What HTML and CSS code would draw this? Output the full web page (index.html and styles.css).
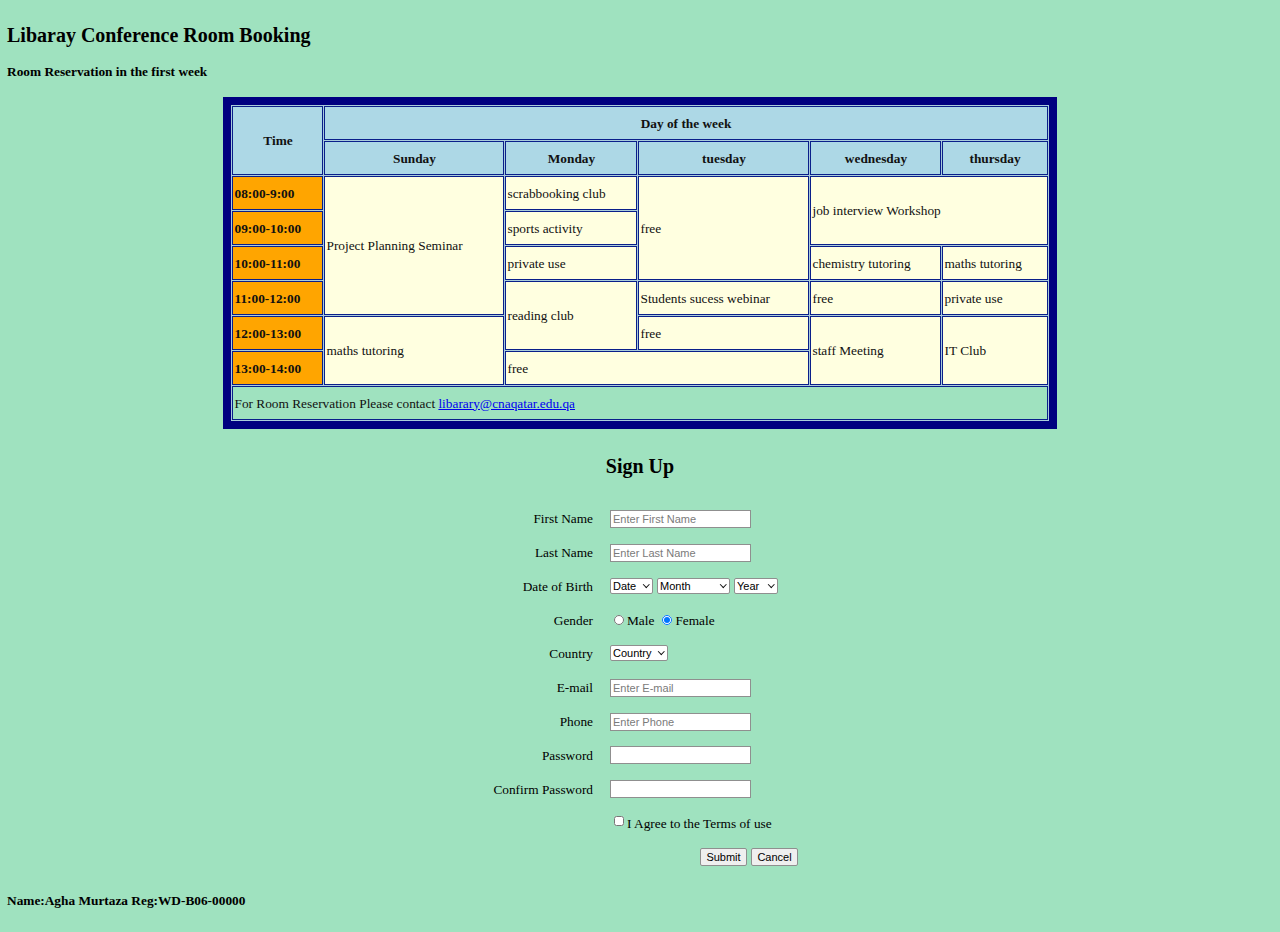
FILE: index.html
```html
<!DOCTYPE html>
<html lang="en">
<head>
<meta charset="utf-8">
<title>Libaray Conference Room Booking</title>
<link rel="stylesheet" href="styles.css">
</head>
<body>
<h1 class="title">Libaray Conference Room Booking</h1>
<h4 class="subtitle">Room Reservation in the first week</h4>

<table class="schedule">
  <colgroup>
    <col class="c-time">
    <col class="c-sun">
    <col class="c-mon">
    <col class="c-tue">
    <col class="c-wed">
    <col class="c-thu">
  </colgroup>
  <tr>
    <th class="head" rowspan="2">Time</th>
    <th class="head" colspan="5">Day of the week</th>
  </tr>
  <tr>
    <th class="head">Sunday</th>
    <th class="head">Monday</th>
    <th class="head">tuesday</th>
    <th class="head">wednesday</th>
    <th class="head">thursday</th>
  </tr>
  <tr>
    <th class="slot">08:00-9:00</th>
    <td rowspan="4">Project Planning Seminar</td>
    <td>scrabbooking club</td>
    <td rowspan="3">free</td>
    <td colspan="2" rowspan="2">job interview Workshop</td>
  </tr>
  <tr>
    <th class="slot">09:00-10:00</th>
    <td>sports activity</td>
  </tr>
  <tr>
    <th class="slot">10:00-11:00</th>
    <td>private use</td>
    <td>chemistry tutoring</td>
    <td>maths tutoring</td>
  </tr>
  <tr>
    <th class="slot">11:00-12:00</th>
    <td rowspan="2">reading club</td>
    <td>Students sucess webinar</td>
    <td>free</td>
    <td>private use</td>
  </tr>
  <tr>
    <th class="slot">12:00-13:00</th>
    <td rowspan="2">maths tutoring</td>
    <td>free</td>
    <td rowspan="2">staff Meeting</td>
    <td rowspan="2">IT Club</td>
  </tr>
  <tr>
    <th class="slot">13:00-14:00</th>
    <td colspan="2">free</td>
  </tr>
  <tr>
    <td class="contact" colspan="6">For Room Reservation Please contact <a href="#">libarary@cnaqatar.edu.qa</a></td>
  </tr>
</table>

<h2 class="signup-title">Sign Up</h2>

<form class="signup">
  <label class="lbl" for="fn">First Name</label>
  <div class="ctl"><input class="text" id="fn" type="text" placeholder="Enter First Name"></div>

  <label class="lbl" for="ln">Last Name</label>
  <div class="ctl"><input class="text" id="ln" type="text" placeholder="Enter Last Name"></div>

  <span class="lbl">Date of Birth</span>
  <div class="ctl selects">
    <span class="sel-wrap sel-date"><select class="sel"><option>Date</option></select></span>
    <span class="sel-wrap sel-month"><select class="sel"><option>Month</option></select></span>
    <span class="sel-wrap sel-year"><select class="sel"><option>Year</option></select></span>
  </div>

  <span class="lbl">Gender</span>
  <div class="ctl radios">
    <label class="opt"><input class="radio" type="radio" name="g">Male</label>
    <label class="opt"><input class="radio" type="radio" name="g" checked>Female</label>
  </div>

  <span class="lbl lbl-country">Country</span>
  <div class="ctl ctl-country"><span class="sel-wrap sel-country"><select class="sel"><option>Country</option></select></span></div>

  <label class="lbl" for="em">E-mail</label>
  <div class="ctl"><input class="text" id="em" type="text" placeholder="Enter E-mail"></div>

  <label class="lbl" for="ph">Phone</label>
  <div class="ctl"><input class="text" id="ph" type="text" placeholder="Enter Phone"></div>

  <label class="lbl" for="pw">Password</label>
  <div class="ctl"><input class="text" id="pw" type="password"></div>

  <label class="lbl" for="cpw">Confirm Password</label>
  <div class="ctl"><input class="text" id="cpw" type="password"></div>

  <span class="lbl"></span>
  <div class="ctl"><label class="opt agree"><input class="check" type="checkbox">I Agree to the Terms of use</label></div>

  <span class="lbl"></span>
  <div class="ctl buttons">
    <button class="btn" type="button">Submit</button>
    <button class="btn" type="button">Cancel</button>
  </div>
</form>

<p class="credit">Name:Agha Murtaza Reg:WD-B06-00000</p>
</body>
</html>
```

FILE: styles.css
```css
html {
  background: #9fe2bf;
}

body {
  margin: 0;
  padding: 7px;
  background: #9fe2bf;
  color: #000;
  font-family: "Liberation Serif", "Times New Roman", serif;
  font-size: 13.33px;
}

.title {
  margin: 17px 0 0;
  font-size: 20px;
  line-height: 23px;
  font-weight: bold;
}

.subtitle {
  margin: 17px 0 0;
  font-size: 13.33px;
  line-height: 15px;
  font-weight: bold;
}

/* schedule table */
.schedule {
  width: 833px;
  margin: 18px auto 0;
  table-layout: fixed;
  border: 8px solid #000080;
  border-spacing: 1px;
  background: #a9cbdb;
}

.c-time { width: 91px; }
.c-sun { width: 180px; }
.c-mon { width: 132px; }
.c-tue { width: 171px; }
.c-wed { width: 131px; }
.c-thu { width: 105px; }

.schedule th,
.schedule td {
  border: 1px solid #0a1f8a;
  padding: 8.5px 1px 7.5px;
  line-height: 16px;
  font-size: 13.33px;
  vertical-align: middle;
  text-align: left;
  font-weight: normal;
  background: #ffffe0;
  color: #111;
  white-space: nowrap;
  overflow: hidden;
}

.schedule th.head {
  background: #add8e6;
  font-weight: bold;
  text-align: center;
}

.schedule th.slot {
  background: #ffa500;
  font-weight: bold;
}

.schedule td.contact {
  background: #9fe2bf;
}

.contact a {
  color: #0000ee;
  text-decoration: underline;
}

/* sign up */
.signup-title {
  margin: 26px 0 24px;
  text-align: center;
  font-size: 20px;
  line-height: 23px;
  font-weight: bold;
}

.signup {
  display: grid;
  grid-template-columns: 113px 190px;
  grid-auto-rows: 33.8px;
  column-gap: 17px;
  align-items: center;
  width: 320px;
  margin: 0 auto;
}

.lbl {
  text-align: right;
  font-size: 13.33px;
  line-height: 15px;
}

.ctl {
  display: flex;
  align-items: center;
}

.lbl-country,
.ctl-country {
  position: relative;
  top: -1px;
}

.text {
  box-sizing: border-box;
  width: 141px;
  height: 18px;
  margin: 0;
  padding: 1px 2px;
  border: 1px solid #8f8f8f;
  border-radius: 0;
  background: #fff;
  font-family: "Liberation Sans", Arial, sans-serif;
  font-size: 11px;
  color: #000;
}

.text::placeholder {
  color: #7a7a7a;
}

.selects {
  gap: 4px;
}

.sel-wrap {
  position: relative;
  display: inline-block;
  height: 16px;
}

.sel-wrap::after {
  content: "";
  position: absolute;
  right: 5px;
  top: 3.5px;
  width: 3.5px;
  height: 3.5px;
  border-right: 1.6px solid #111;
  border-bottom: 1.6px solid #111;
  transform: rotate(45deg);
  pointer-events: none;
}

.sel {
  -webkit-appearance: none;
  appearance: none;
  box-sizing: border-box;
  width: 100%;
  height: 16px;
  margin: 0;
  padding: 0 0 0 2px;
  border: 1px solid #8f8f8f;
  border-radius: 2px;
  background: #fff;
  font-family: "Liberation Sans", Arial, sans-serif;
  font-size: 11px;
  line-height: 14px;
  color: #000;
}

.sel-date { width: 43px; }
.sel-month { width: 73px; }
.sel-year { width: 44px; }
.sel-country { width: 58px; }

.radios {
  gap: 8px;
}

.opt {
  display: inline-flex;
  align-items: center;
  font-size: 13.33px;
  line-height: 15px;
}

.radio {
  width: 10px;
  height: 10px;
  margin: 0 3px 0 4px;
}

.radios .opt + .opt .radio {
  margin-left: 0;
}

.check {
  width: 10px;
  height: 10px;
  margin: 0 3px 0 4px;
  position: relative;
  top: -2px;
}

.buttons {
  justify-content: flex-end;
  gap: 4px;
  padding-right: 2px;
}

.btn {
  box-sizing: border-box;
  width: 47px;
  height: 18px;
  margin: 0;
  padding: 0 4px;
  border: 1px solid #8f8f8f;
  border-radius: 2px;
  background: #efefef;
  font-family: "Liberation Sans", Arial, sans-serif;
  font-size: 11px;
  color: #000;
}

.credit {
  margin: 19px 0 0;
  font-weight: bold;
  font-size: 13.33px;
  line-height: 15px;
}
```
